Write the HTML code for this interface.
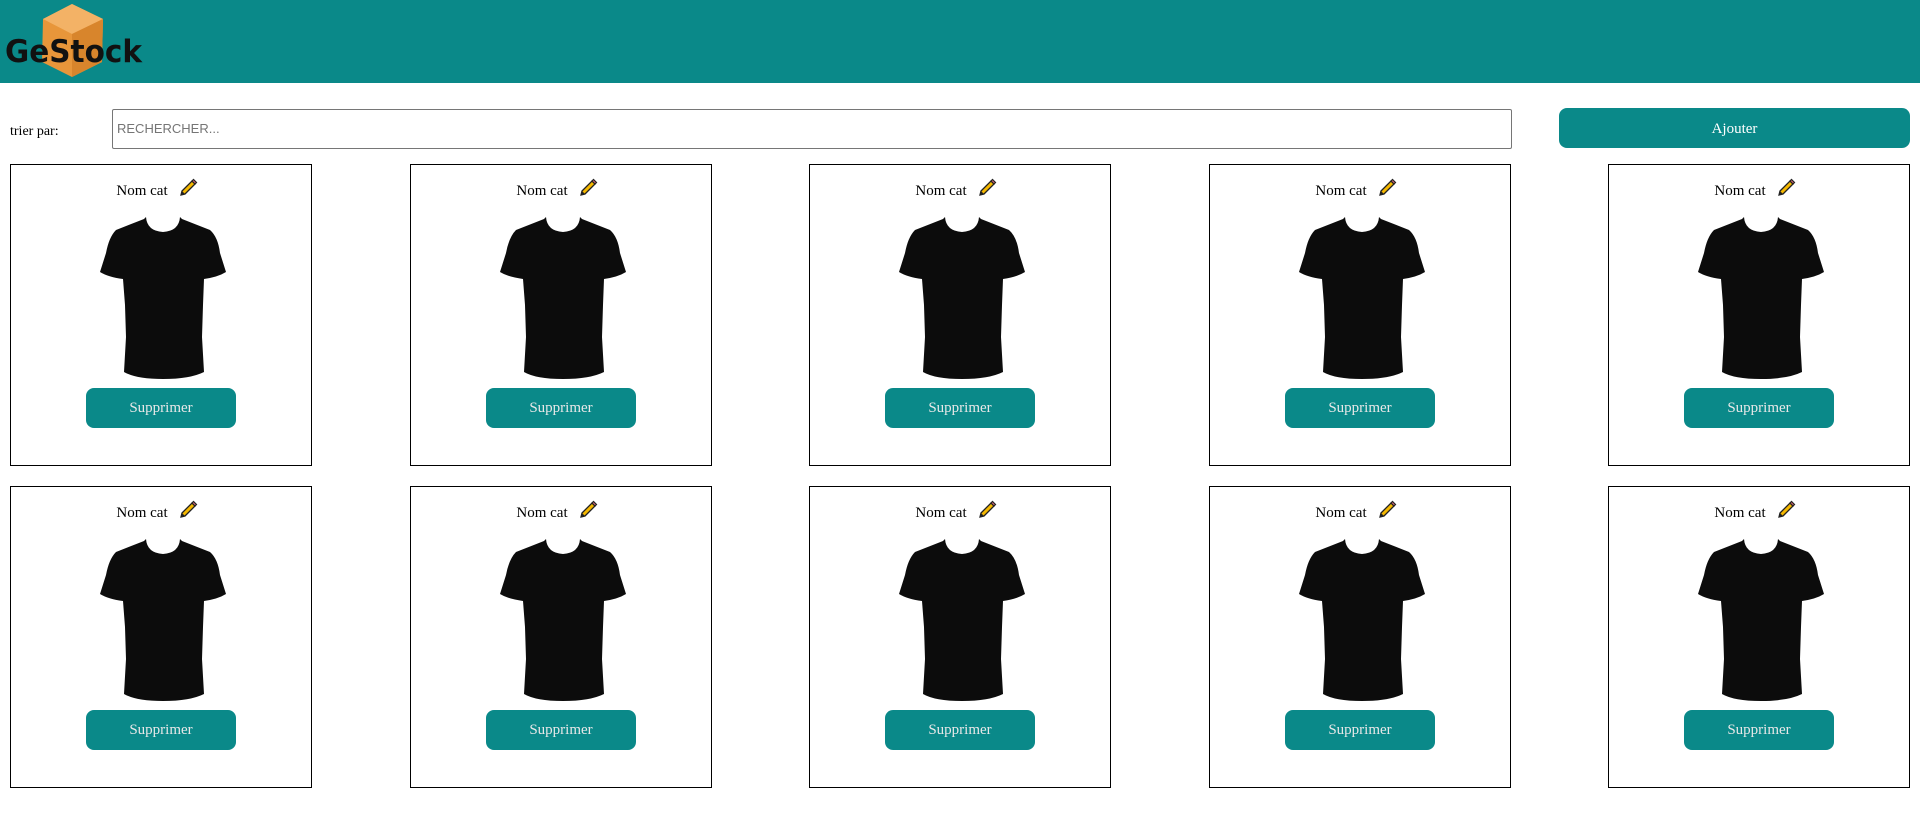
<!DOCTYPE html>
<html><head><meta charset="utf-8"><style>
*{box-sizing:border-box;margin:0;padding:0}
body{width:1920px;height:829px;background:#fff;font-family:"Liberation Serif",serif;position:relative;overflow:hidden}
header{position:absolute;left:0;top:0;width:1920px;height:83px;background:#0a8989}
.logo{position:absolute;left:4px;top:0}
.lbl{position:absolute;left:10px;top:124px;font-size:14px}
.search{position:absolute;left:112px;top:109px;width:1400px;height:40px;border:1px solid #767676;border-radius:2px;font-family:"Liberation Sans",sans-serif;font-size:13px;color:#757575;padding:11px 4px}
.add{position:absolute;left:1559px;top:108px;width:351px;height:40px;background:#0a8989;border-radius:8px;color:#fff;font-size:15px;text-align:center;line-height:42px}
.card{position:absolute;width:302px;height:302px;border:1px solid #000}
.t{position:absolute;top:13px;left:-4px;width:100%;text-align:center;font-size:15px}
.t svg{vertical-align:-3px;margin-left:10px}
.shirt{position:absolute;left:89px;top:52px}
.btn{position:absolute;left:75px;top:223px;width:150px;height:40px;background:#0a8989;border-radius:8px;color:#e8e8e8;font-size:15px;text-align:center;line-height:40px}
</style></head><body>
<header><svg class="logo" width="150" height="80" viewBox="0 0 150 80">
<polygon points="68,4 99,19 98,62 68,77 38,62 39,19" fill="#e8963a"/>
<polygon points="68,4 99,19 68,34 39,19" fill="#f3b266"/>
<polygon points="68,34 99,19 98,62 68,77" fill="#d8852c"/>
<text x="1" y="62" font-family="DejaVu Sans,sans-serif" font-weight="bold" font-size="31" fill="#111" textLength="137" lengthAdjust="spacingAndGlyphs">GeStock</text>
</svg></header>
<div class="lbl">trier par:</div>
<div class="search">RECHERCHER...</div>
<div class="add">Ajouter</div>
<div id="g"></div>
<script>
var xs=[10,410,809,1209,1608],ys=[164,486],h='';
var pen='<svg width="20" height="20" viewBox="0 0 20 20"><path d="M3 17 L4 13 L14 3 L17 6 L7 16 Z" fill="#f5b800" stroke="#222" stroke-width="1.3"/><path d="M14 3 L17 6 L18.5 4.5 L15.5 1.5Z" fill="#e06a7a" stroke="#222" stroke-width="1.2"/><path d="M3 17 L4 13 L7 16Z" fill="#222"/></svg>';
var sh='<svg width="126" height="164" viewBox="0 0 126 164"><path d="M46 0 Q47 14 63 15 Q79 14 80 0 L82 2 L110 13 Q118 20 120 36 L126 55 Q118 60 104 62 L103 88 L102 120 L104 155 Q90 162 63 162 Q36 162 24 155 L26 120 L25 88 L23 62 Q8 60 0 55 L6 36 Q9 20 16 13 L44 2 Z" fill="#0c0c0c"/></svg>';
ys.forEach(function(y){xs.forEach(function(x){h+='<div class="card" style="left:'+x+'px;top:'+y+'px"><div class="t">Nom cat'+pen+'</div><div class="shirt">'+sh+'</div><div class="btn">Supprimer</div></div>';});});
document.getElementById('g').innerHTML=h;
</script>
</body></html>
